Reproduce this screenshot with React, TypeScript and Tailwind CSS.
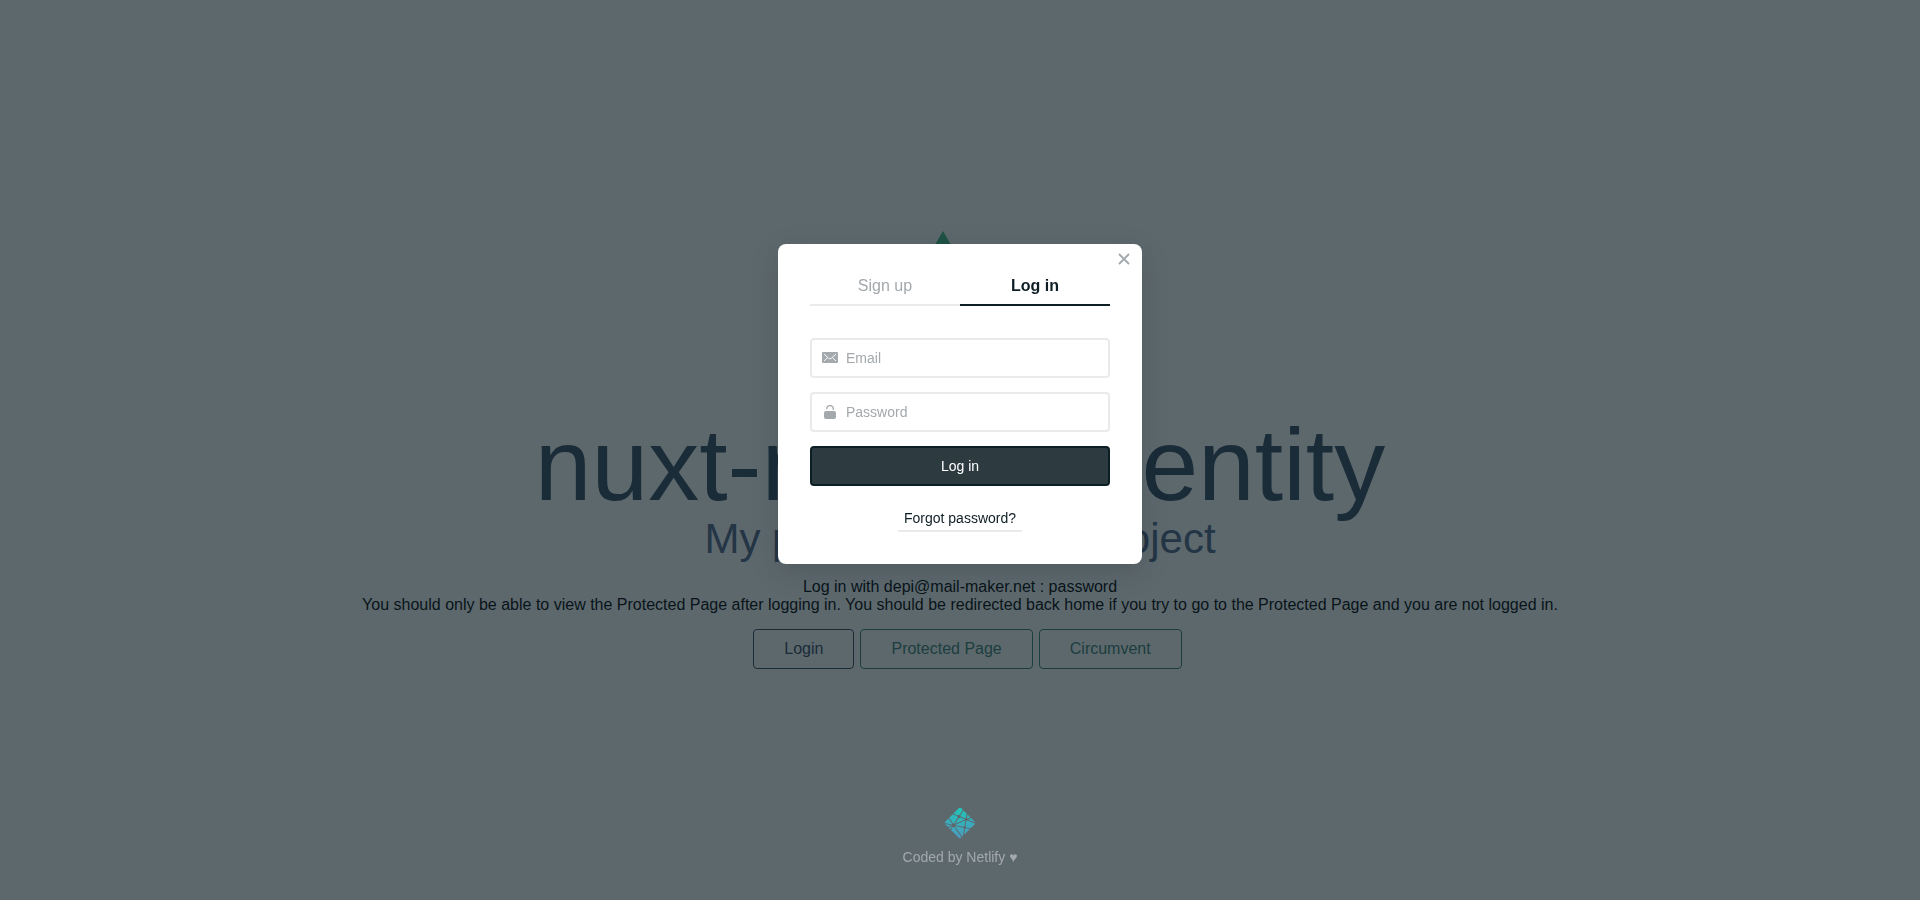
import { useId } from 'react';
import type { ReactNode } from 'react';

function NuxtLogo() {
  return (
    <svg width="245" height="180" viewBox="0 0 245 180" fill="none" aria-hidden="true">
      <path d="M105 0L0 180h62l43-76 43 76h62z" fill="#41b883" />
      <path d="M158 62L90 180h136z" fill="#35495e" />
    </svg>
  );
}

function NetlifyLogo() {
  const id = useId();
  return (
    <svg width="32" height="32" viewBox="0 0 40 40" aria-hidden="true">
      <defs>
        <radialGradient id={id} cx="50%" cy="0%" r="100%" gradientTransform="matrix(0 1 -1.152 0 .5 -.5)">
          <stop offset="0%" stopColor="#20c6b7" />
          <stop offset="100%" stopColor="#4d9abf" />
        </radialGradient>
      </defs>
      <path
        fill={`url(#${id})`}
        d="M28.589 14.135l-.014-.006c-.008-.003-.016-.006-.023-.013a.11.11 0 0 1-.028-.093l.773-4.726 3.625 3.626-3.77 1.604a.083.083 0 0 1-.033.006h-.015c-.005-.003-.01-.007-.02-.017a1.716 1.716 0 0 0-.495-.381zm5.258-.288l3.876 3.876c.805.806 1.208 1.208 1.355 1.674.022.069.04.138.054.209l-9.263-3.923a.728.728 0 0 0-.015-.006c-.037-.015-.08-.032-.08-.07 0-.038.044-.056.081-.071l.012-.005 3.98-1.684zm5.127 7.003c-.2.376-.59.766-1.25 1.427l-4.37 4.369-5.652-1.177-.03-.006c-.05-.008-.103-.017-.103-.062a1.706 1.706 0 0 0-.655-1.193c-.023-.023-.017-.059-.01-.092 0-.005 0-.01.002-.014l1.063-6.526.004-.022c.006-.05.015-.108.06-.108a1.73 1.73 0 0 0 1.16-.665c.009-.01.015-.021.027-.027.032-.015.07 0 .103.014l9.65 4.082zm-6.625 6.801l-7.186 7.186 1.23-7.56.002-.01c.001-.01.003-.02.006-.029.01-.024.036-.034.061-.044l.012-.005a1.85 1.85 0 0 0 .695-.517c.024-.028.053-.055.09-.06a.09.09 0 0 1 .029 0l5.06 1.04zm-8.707 8.707l-.81.81-8.955-12.942a.424.424 0 0 0-.01-.014c-.014-.019-.029-.038-.026-.06.001-.016.011-.03.022-.042l.01-.013c.027-.04.05-.08.075-.123l.02-.035.003-.003c.014-.024.027-.047.051-.06.021-.01.05-.006.073-.001l9.921 2.046a.164.164 0 0 1 .076.033c.013.013.016.027.019.043a1.757 1.757 0 0 0 1.028 1.175c.028.014.016.045.003.078a.238.238 0 0 0-.015.045c-.125.76-1.197 7.298-1.485 9.063zm-1.692 1.691c-.597.591-.949.904-1.347 1.03a2 2 0 0 1-1.206 0c-.466-.148-.869-.55-1.674-1.356L8.73 28.73l2.349-3.643c.011-.018.022-.034.04-.047.025-.018.061-.01.091 0a2.434 2.434 0 0 0 1.638-.083c.027-.01.054-.017.075.002a.19.19 0 0 1 .028.032L21.95 38.05zM7.863 27.863L5.8 25.8l4.074-1.738a.084.084 0 0 1 .033-.007c.034 0 .054.034.072.065a2.91 2.91 0 0 0 .13.184l.013.016c.012.017.004.034-.008.05l-2.25 3.493zm-2.976-2.976l-2.61-2.61c-.444-.444-.766-.766-.99-1.043l7.936 1.646a.84.84 0 0 0 .03.005c.049.008.103.017.103.063 0 .05-.059.073-.109.092l-.023.01-4.337 1.837zM.831 19.892a2 2 0 0 1 .09-.495c.148-.466.55-.868 1.356-1.674l3.34-3.34a2175.525 2175.525 0 0 0 4.626 6.687c.027.036.057.076.026.106-.146.161-.292.337-.395.528a.16.16 0 0 1-.05.062c-.013.008-.027.005-.042.002H9.78L.831 19.891zm5.68-6.403l4.491-4.491c.422.185 1.958.834 3.332 1.414 1.04.44 1.988.84 2.286.97.03.012.057.024.07.054.008.018.004.041 0 .06a2.003 2.003 0 0 0 .523 1.828c.03.03 0 .073-.026.11l-.014.021-4.56 7.063c-.012.02-.023.037-.043.05-.024.015-.058.008-.086.001a2.274 2.274 0 0 0-.543-.074c-.164 0-.342.03-.522.063h-.001c-.02.003-.038.007-.054-.005a.21.21 0 0 1-.045-.051l-4.808-7.013zm5.398-5.398l5.814-5.814c.805-.805 1.208-1.208 1.674-1.355a2 2 0 0 1 1.206 0c.466.147.869.55 1.674 1.355l1.26 1.26-4.135 6.404a.155.155 0 0 1-.041.048c-.025.017-.06.01-.09 0a2.097 2.097 0 0 0-1.92.37c-.027.028-.067.012-.101-.003-.54-.235-4.74-2.01-5.341-2.265zm12.506-3.676l3.818 3.818-.92 5.698v.015a.135.135 0 0 1-.008.038c-.01.02-.03.024-.05.03a1.83 1.83 0 0 0-.548.273.154.154 0 0 0-.02.017c-.011.012-.022.023-.04.025a.114.114 0 0 1-.043-.007l-5.818-2.472-.011-.005c-.037-.015-.081-.033-.081-.071a2.198 2.198 0 0 0-.31-.915c-.028-.046-.059-.094-.035-.141l4.066-6.303zm-3.932 8.606l5.454 2.31c.03.014.063.027.076.058a.106.106 0 0 1 0 .057c-.016.08-.03.171-.03.263v.153c0 .038-.039.054-.075.069l-.011.004c-.864.369-12.13 5.173-12.147 5.173-.017 0-.035 0-.052-.017-.03-.03 0-.072.027-.11a.76.76 0 0 0 .014-.02l4.482-6.94.008-.012c.026-.042.056-.089.104-.089l.045.007c.102.014.192.027.283.027.68 0 1.31-.331 1.69-.897a.16.16 0 0 1 .034-.04c.027-.02.067-.01.098.004zm-6.246 9.185l12.28-5.237s.018 0 .035.017c.067.067.124.112.179.154l.027.017c.025.014.05.03.052.056 0 .01 0 .016-.002.025L25.756 23.7l-.004.026c-.007.05-.014.107-.061.107a1.729 1.729 0 0 0-1.373.847l-.005.008c-.014.023-.027.045-.05.057-.021.01-.048.006-.07.001l-9.793-2.02c-.01-.002-.152-.519-.163-.52z"
      />
    </svg>
  );
}

function MailIcon() {
  return (
    <svg width="16" height="12" viewBox="0 0 16 12" aria-hidden="true">
      <rect width="16" height="11" rx="1" fill="#a3a9ac" />
      <path d="M2 2l4.800 4.400q1.200 1 2.400 0L14 2M2 9l3.500-3.300M14 9l-3.500-3.300" fill="none" stroke="#fff" strokeWidth="0.9" />
    </svg>
  );
}

function LockIcon() {
  return (
    <svg width="12" height="14" viewBox="0 0 12 14" aria-hidden="true">
      <rect y="6" width="12" height="8" rx="2" fill="#a3a9ac" />
      <path d="M2.700 4.300V4a3.300 3.300 0 0 1 6.600 0v1" fill="none" stroke="#a3a9ac" strokeWidth="1.300" />
    </svg>
  );
}

function Field({ type, label, icon }: { type: string; label: string; icon: ReactNode }) {
  return (
    <label className="flex h-10 items-center rounded border-2 border-[#e9ebeb] bg-white pl-2.5">
      <span className="flex w-4 justify-center">{icon}</span>
      <input
        type={type}
        placeholder={label}
        aria-label={label}
        className="h-full min-w-0 flex-1 bg-transparent px-2 text-sm text-[#0e1e25] outline-none placeholder:text-[#a3a9ac]"
      />
    </label>
  );
}

function HomePage() {
  return (
    <main className="flex min-h-screen flex-col items-center justify-center text-center text-base/[18px] text-black">
      <div className="flex h-46 flex-col items-center">
        <NuxtLogo />
      </div>
      <h1 className="text-[102px]/[100px] text-[#35495e]">nuxt-netlify-identity</h1>
      <h2 className="pb-[15px] text-[42px]/[48px] text-[#526488]">My priceless Nuxt.js project</h2>
      <p>Log in with depi@mail-maker.net : password</p>
      <p>
        You should only be able to view the Protected Page after logging in. You should be redirected back home if you
        try to go to the Protected Page and you are not logged in.
      </p>
      <div className="flex gap-[6px] pt-[15px] pl-[15px]">
        <button type="button" className="h-10 rounded border border-[#35495e] px-[30px] text-[#35495e]">
          Login
        </button>
        <a href="#protected" className="h-10 rounded border border-[#3b8070] px-[30px] py-2.5 text-[#3b8070]">
          Protected Page
        </a>
        <a href="#circumvent" className="h-10 rounded border border-[#3b8070] px-[30px] py-2.5 text-[#3b8070]">
          Circumvent
        </a>
      </div>
    </main>
  );
}

function LoginDialog() {
  return (
    <div
      role="dialog"
      aria-label="Log in"
      className="relative w-[364px] rounded-lg bg-white p-8 pt-6 shadow-[0_8px_28px_rgba(14,30,37,0.18)]"
    >
      <button type="button" aria-label="Close" className="absolute top-2 right-[11px] p-px">
        <svg width="12" height="12" viewBox="0 0 12 12" fill="none" stroke="#a3a9ac" strokeWidth="1.900" strokeLinecap="round">
          <path d="M1.500 1.500l9 9M10.500 1.500l-9 9" />
        </svg>
      </button>
      <div className="grid grid-cols-2 pb-8 text-base/[20px]">
        <button type="button" className="h-[38px] border-b-2 border-[#e9ebeb] text-[#a3a9ac]">
          Sign up
        </button>
        <button type="button" className="h-[38px] border-b-2 border-[#0e1e25] font-bold text-[#0e1e25]">
          Log in
        </button>
      </div>
      <form className="flex flex-col gap-3.5">
        <Field type="email" label="Email" icon={<MailIcon />} />
        <Field type="password" label="Password" icon={<LockIcon />} />
        <button
          type="button"
          className="h-10 rounded border-2 border-[#0e1e25] bg-[#2d3b41] text-sm text-white"
        >
          Log in
        </button>
        <button
          type="button"
          className="mt-1.5 h-[26px] self-center border-b-2 border-[#e9ebeb] px-1.5 text-sm/[20px] text-[#0e1e25]"
        >
          Forgot password?
        </button>
      </form>
    </div>
  );
}

export default function App() {
  return (
    <div className="bg-white font-['Liberation_Sans',Arial,sans-serif]">
      <HomePage />
      <div className="fixed inset-0 flex flex-col items-center bg-[#0e1e25]/67 pt-px">
        <div className="flex flex-1 items-center">
          <LoginDialog />
        </div>
        <a href="#netlify" className="flex h-[93px] flex-col items-center gap-2 text-sm/[20px] text-[#a3a9ac]">
          <NetlifyLogo />
          Coded by Netlify ♥
        </a>
      </div>
    </div>
  );
}
